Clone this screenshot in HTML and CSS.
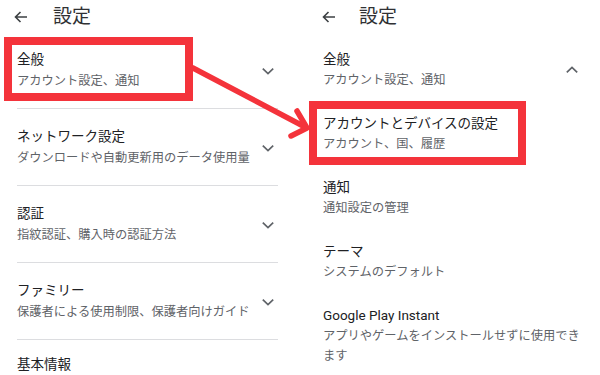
FILE: index.html
```html
<!DOCTYPE html>
<html lang="ja">
<head>
<meta charset="utf-8">
<title>設定</title>
<link rel="stylesheet" href="styles.css">
</head>
<body>
<div class="page">
  <section class="panel panel-left">
    <header class="bar">
      <svg class="back" width="14" height="12" viewBox="0 0 14 12"><path d="M13 6H1.5M6.5 1L1.5 6l5 5" fill="none" stroke="#3c4043" stroke-width="1.6"/></svg>
      <h1 class="title">設定</h1>
    </header>
    <ul class="list">
      <li class="row row-l">
        <div class="text"><div class="t">全般</div><div class="s">アカウント設定、通知</div></div>
        <svg class="chev" width="20" height="20" viewBox="0 0 20 20"><path d="M4.8 7.6L10 12.6l5.2-5" fill="none" stroke="#5f6368" stroke-width="1.7"/></svg>
      </li>
      <li class="row row-l">
        <div class="text"><div class="t">ネットワーク設定</div><div class="s">ダウンロードや自動更新用のデータ使用量</div></div>
        <svg class="chev" width="20" height="20" viewBox="0 0 20 20"><path d="M4.8 7.6L10 12.6l5.2-5" fill="none" stroke="#5f6368" stroke-width="1.7"/></svg>
      </li>
      <li class="row row-l">
        <div class="text"><div class="t">認証</div><div class="s">指紋認証、購入時の認証方法</div></div>
        <svg class="chev" width="20" height="20" viewBox="0 0 20 20"><path d="M4.8 7.6L10 12.6l5.2-5" fill="none" stroke="#5f6368" stroke-width="1.7"/></svg>
      </li>
      <li class="row row-l">
        <div class="text"><div class="t">ファミリー</div><div class="s">保護者による使用制限、保護者向けガイド</div></div>
        <svg class="chev" width="20" height="20" viewBox="0 0 20 20"><path d="M4.8 7.6L10 12.6l5.2-5" fill="none" stroke="#5f6368" stroke-width="1.7"/></svg>
      </li>
      <li class="row row-last">
        <div class="text"><div class="t">基本情報</div></div>
      </li>
    </ul>
  </section>

  <section class="panel panel-right">
    <header class="bar">
      <svg class="back" width="14" height="12" viewBox="0 0 14 12"><path d="M13 6H1.5M6.5 1L1.5 6l5 5" fill="none" stroke="#3c4043" stroke-width="1.6"/></svg>
      <h1 class="title">設定</h1>
    </header>
    <ul class="list">
      <li class="row row-r">
        <div class="text"><div class="t">全般</div><div class="s">アカウント設定、通知</div></div>
        <svg class="chev chev-r" width="20" height="20" viewBox="0 0 20 20"><path d="M4.8 12.4L10 7.4l5.2 5" fill="none" stroke="#5f6368" stroke-width="1.7"/></svg>
      </li>
      <li class="row row-r">
        <div class="text"><div class="t">アカウントとデバイスの設定</div><div class="s">アカウント、国、履歴</div></div>
      </li>
      <li class="row row-r">
        <div class="text"><div class="t">通知</div><div class="s">通知設定の管理</div></div>
      </li>
      <li class="row row-r">
        <div class="text"><div class="t">テーマ</div><div class="s">システムのデフォルト</div></div>
      </li>
      <li class="row row-r">
        <div class="text"><div class="t">Google Play Instant</div><div class="s">アプリやゲームをインストールせずに使用できます</div></div>
      </li>
    </ul>
  </section>

  <div class="callout callout-a"></div>
  <div class="callout callout-b"></div>
  <svg class="annot" width="600" height="375" viewBox="0 0 600 375">
    <path d="M193 68L305 127" fill="none" stroke="#f4333b" stroke-width="5.5" stroke-linecap="round"/>
    <path d="M297 111L307 128L291 136" fill="none" stroke="#f4333b" stroke-width="5.5" stroke-linecap="round" stroke-linejoin="round"/>
  </svg>
</div>
</body>
</html>
```

FILE: styles.css
```css
* { box-sizing: border-box; }
html, body { margin: 0; padding: 0; background: #fff; }
body {
  width: 600px;
  height: 375px;
  overflow: hidden;
  font-family: Roboto, "Noto Sans CJK JP", "Noto Sans", sans-serif;
  color: #202124;
}
.page {
  position: relative;
  display: flex;
  width: 600px;
  height: 375px;
  overflow: hidden;
}
.panel { display: flex; flex-direction: column; }
.panel-left { width: 306px; flex: none; }
.panel-right { flex: 1; }

.bar {
  display: flex;
  align-items: center;
  height: 32px;
  padding-top: 2px;
}
.panel-left .bar { padding-left: 14px; }
.panel-right .bar { padding-left: 16px; }
.back { flex: none; }
.title {
  margin: 0;
  font-size: 19px;
  line-height: 30px;
  font-weight: 400;
  color: #303134;
}
.panel-left .title { margin-left: 25px; }
.panel-right .title { margin-left: 23px; }

.list { list-style: none; margin: 0; padding: 0; }
.panel-left .list { margin-left: 17px; width: 261px; }
.panel-right .list { margin-left: 17px; width: 265px; }

.row { display: flex; align-items: center; justify-content: space-between; }
.row-l {
  height: 77px;
  padding: 17px 0 16px;
  border-bottom: 1px solid #dcdde0;
}
.row-last { padding-top: 14px; }
.row-r { padding: 17px 0 6px; min-height: 64px; align-items: center; }

.text { flex: 1; min-width: 0; }
.t { font-size: 13.5px; line-height: 21px; color: #202124; }
.s { font-size: 12.25px; color: #5f6368; }
.row-l .s { line-height: 22px; }
.row-r .s { line-height: 20px; }
.chev { flex: none; }
.chev-r { margin-right: 6px; }

.callout {
  position: absolute;
  border: 8px solid #f4333b;
}
.callout-a { left: 4px; top: 37px; width: 189px; height: 64px; }
.callout-b { left: 309px; top: 101px; width: 217px; height: 64px; }
.annot { position: absolute; left: 0; top: 0; pointer-events: none; }
```
